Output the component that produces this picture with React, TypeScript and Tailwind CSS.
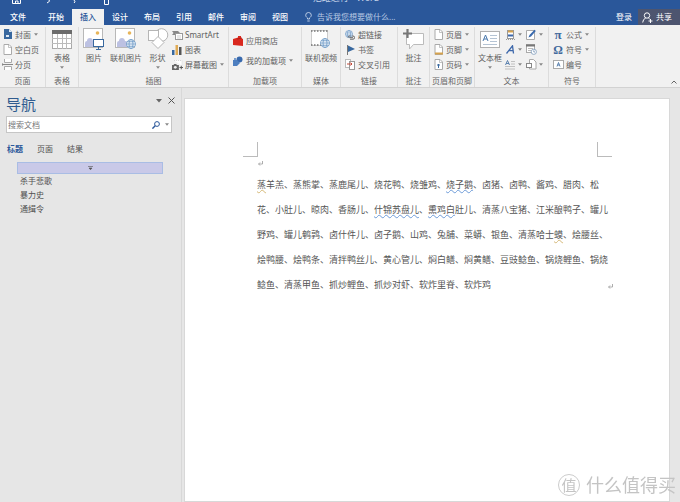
import React from 'react';

interface ChildrenProps {
    children: React.ReactNode;
}

interface GroupProps extends ChildrenProps {
    title: string;
    className: string;
}

interface ButtonProps {
    icon: React.ReactNode;
    label?: string;
    arrow?: boolean;
    className?: string;
}

const tabs = ['开始', '插入', '设计', '布局', '引用', '邮件', '审阅', '视图'];

const headings = ['杀手悲歌', '暴力史', '通缉令'];

const Caret = () => (
    <svg viewBox="0 0 4 3" className="h-[3px] w-1 shrink-0" fill="#888">
        <path d="M0 .3h4L2 2.7z" />
    </svg>
);

// All ribbon icons share one svg wrapper, drawn at their real size
const Icon = ({ w, h, children }: ChildrenProps & { w: number; h: number }) => (
    <svg width={w} height={h} viewBox={`0 0 ${w} ${h}`} fill="none" className="shrink-0">
        {children}
    </svg>
);

const Group = ({ title, className, children }: GroupProps) => (
    <section className={`flex shrink-0 flex-col border-r border-[#dcdcdc] ${className}`}>
        <div className="flex h-[46px]">{children}</div>
        <h2 className="mt-[2px] whitespace-nowrap text-center text-[8px] leading-[12px] text-[#666]">{title}</h2>
    </section>
);

const LargeButton = ({ icon, label, arrow, className = '' }: ButtonProps) => (
    <button type="button" className={`flex shrink-0 flex-col items-center ${className}`}>
        <span className="flex h-[24px] items-center">{icon}</span>
        <span className="whitespace-nowrap text-[8px] leading-[13px]">{label}</span>
        {arrow && <span className="flex h-[7px] items-center"><Caret /></span>}
    </button>
);

const SmallButton = ({ icon, label, arrow, className = '' }: ButtonProps) => (
    <button
        type="button"
        aria-label={label ? undefined : '更多'}
        className={`flex h-[15px] items-center gap-[3px] whitespace-nowrap text-[8px] leading-[12px] ${className}`}
    >
        <span className="flex w-[10px] shrink-0 justify-center">{icon}</span>
        {label && <span>{label}</span>}
        {arrow && <Caret />}
    </button>
);

const Globe = ({ x, y }: { x: number; y: number }) => (
    <g transform={`translate(${x} ${y})`} stroke="#6f9bc6" strokeWidth=".8">
        <circle cx="5" cy="5" r="4.5" fill="#eef4fa" />
        <ellipse cx="5" cy="5" rx="2" ry="4.5" />
        <path d="M.5 5h9M1.3 2.7h7.4M1.3 7.3h7.4" />
    </g>
);

const Photo = () => (
    <>
        <rect x=".5" y=".5" width="19" height="19" fill="#fff" stroke="#b8b8b8" />
        <circle cx="14.5" cy="5" r="1.8" fill="#e8b55a" />
        <path d="M2 19v-4q0-2 2-2 0-3 3-3 2.500 0 3 3 3 0 3 3v3z" fill="#bcc1e2" />
    </>
);

const TableIcon = () => (
    <Icon w={20} h={19}>
        <rect x=".5" y=".5" width="19" height="18" fill="#fff" stroke="#aaa" />
        <rect width="20" height="4" fill="#6c6c6c" />
        <path d="M5.500 4v15M10.500 4v15M14.500 4v15M0 8.500h20M0 13.500h20" stroke="#bbb" />
    </Icon>
);

const PictureIcon = () => (
    <Icon w={22} h={22}>
        <Photo />
        <rect x="10.500" y="11.500" width="10" height="7" fill="#fff" stroke="#38689f" />
        <path d="M15.500 19v2M13 21.500h5" stroke="#38689f" />
    </Icon>
);

const OnlinePictureIcon = () => (
    <Icon w={22} h={22}>
        <Photo />
        <Globe x={11} y={11} />
    </Icon>
);

const ShapesIcon = () => (
    <Icon w={22} h={22}>
        <circle cx="14.500" cy="7" r="6.300" fill="#fff" stroke="#b5b5b5" />
        <rect x="1.500" y="2.500" width="10" height="10" fill="#fff" stroke="#b5b5b5" />
        <path d="M11 8.500l6 6-6 6-6-6z" fill="#fff" stroke="#b5b5b5" />
    </Icon>
);

const PageIcon = ({ children }: { children?: React.ReactNode }) => (
    <Icon w={9} h={11}>
        <path d="M1 .5h5L8.500 3v7.500H1z" fill="#fff" stroke="#aaa" />
        <path d="M5.500.5V3.500h3" stroke="#aaa" strokeWidth=".7" />
        {children}
    </Icon>
);

const CoverIcon = () => (
    <Icon w={9} h={11}>
        <path d="M1 0h5l3 3v7H1z" fill="#38689f" />
        <path d="M6 0v3h3M3 6h3v2H3z" fill="#dce8f4" />
    </Icon>
);

const BreakIcon = () => (
    <Icon w={11} h={11}>
        <path d="M2.500 0v3.500h7V0M2.500 11V7.500h7V11" fill="#fff" stroke="#aaa" />
        <path d="M0 5.500h11" stroke="#888" />
        <path d="M0 4l2 1.500L0 7z" fill="#888" />
    </Icon>
);

const SmartArtIcon = () => (
    <Icon w={11} h={10}>
        <path d="M0 1h6l2 2-2 2H0l1.500-2z" fill="#888" />
        <rect x="3.500" y="3.500" width="7" height="6" fill="#fff" stroke="#999" />
        <path d="M5 6h4M5 8h4" stroke="#bbb" strokeWidth=".7" />
    </Icon>
);

const ChartIcon = () => (
    <Icon w={10} h={11}>
        <path d="M0 6h2.500v5H0z" fill="#38689f" />
        <path d="M3.500 1H6v10H3.500z" fill="#e0ab55" />
        <path d="M7 3h2.500v8H7z" fill="#555" />
    </Icon>
);

const ScreenshotIcon = () => (
    <Icon w={11} h={11}>
        <path d="M2 1.500h8v5" fill="#fff" stroke="#d5d5d5" strokeDasharray="1 1" />
        <path d="M0 6h1.500l.7-1h2l.7 1h2v5H0z" fill="#666" />
        <circle cx="3.300" cy="8.300" r="1.400" fill="#eee" />
        <path d="M7.500 8.500h3.500M9.250 6.800v3.500" stroke="#555" />
    </Icon>
);

const StoreIcon = () => (
    <Icon w={10} h={10}>
        <path d="M0 3l5-1.500V0h3v2l2 1v7L0 9z" fill="#d9281e" />
        <path d="M4 3l5-1" stroke="#b51d14" />
    </Icon>
);

const AddinIcon = () => (
    <Icon w={10} h={10}>
        <circle cx="6.500" cy="3.500" r="3" fill="#3869ad" />
        <path d="M0 4h4l3 3-3 3H0z" fill="#4d7fc0" />
        <circle cx="2" cy="3" r="1" fill="#4d7fc0" />
    </Icon>
);

const VideoIcon = () => (
    <Icon w={20} h={20}>
        <rect x=".5" y="1.500" width="16" height="15" fill="#fff" stroke="#ccc" />
        <path d="M0 2h17M0 16h17" stroke="#777" strokeWidth="1.500" strokeDasharray="1.500 1.500" />
        <Globe x={9} y={9} />
    </Icon>
);

const LinkIcon = () => (
    <Icon w={10} h={10}>
        <g transform="scale(.8)"><Globe x={0} y={0} /></g>
        <path d="M3 7.500a1.500 1.500 0 011.500-1.500h1M7 6h1a1.500 1.500 0 010 3.200H5M4.500 7.700H8" stroke="#666" />
    </Icon>
);

const FlagIcon = () => (
    <Icon w={9} h={10}>
        <path d="M1.500 0v10" stroke="#777" />
        <path d="M2 .5l7 3.500-7 3z" fill="#38689f" />
    </Icon>
);

const CrossRefIcon = () => (
    <Icon w={10} h={11}>
        <rect x=".5" y=".5" width="5" height="8" fill="#fff" stroke="#bbb" />
        <rect x="4.500" y="2.500" width="5" height="8" fill="#fff" stroke="#999" />
        <path d="M2 5h5M5.500 3.500L7 5 5.500 6.500" stroke="#c24a3a" />
    </Icon>
);

const CommentIcon = () => (
    <Icon w={21} h={21}>
        <path d="M3.500 4.500h17v11h-10l-4 4.500v-4.500h-3z" fill="#fff" stroke="#bbb" />
        <path d="M4.500 0v9M0 4.500h9" stroke="#777" strokeWidth="2.200" />
    </Icon>
);

const TextBoxIcon = () => (
    <Icon w={20} h={17}>
        <rect x=".5" y=".5" width="19" height="16" fill="#fff" stroke="#b0b0b0" />
        <path d="M3 10l2.500-6L8 10M4 8h3" stroke="#4a78ac" />
        <path d="M10 4.500h7M10 7.500h7M10 10.500h7M3 13.500h14" stroke="#b5c4d4" />
    </Icon>
);

const PartsIcon = () => (
    <Icon w={9} h={10}>
        <rect x="1.500" y=".5" width="6" height="8" fill="#fff" stroke="#999" />
        <path d="M2 1.500h5" stroke="#d6a24c" strokeWidth="2" />
        <path d="M2 5.500h5" stroke="#3d68ab" strokeWidth="2" />
        <path d="M0 9.500h9" stroke="#999" strokeDasharray="1 1" />
    </Icon>
);

const WordArtIcon = () => (
    <Icon w={9} h={9}>
        <path d="M.5 8.500L6.500.8l1 7.700M3 5.700h4" stroke="#3d68ab" strokeWidth="1.300" />
    </Icon>
);

const DropCapIcon = () => (
    <Icon w={10} h={10}>
        <path d="M.5 5l2-4.500L4.500 5M1.300 3.500h2.500" stroke="#38689f" strokeWidth=".8" />
        <path d="M6 1.500h4M6 4h4M0 6.500h10M0 9h10" stroke="#b5b5b5" strokeWidth=".8" />
    </Icon>
);

const SignatureIcon = () => (
    <Icon w={10} h={11}>
        <path d="M.5 1.500h8v9h-8z" fill="#fff" stroke="#aaa" />
        <path d="M2.500 8.500l1-2.500L8.500.8l1.300 1.300L5 7.500z" fill="#3869ad" />
    </Icon>
);

const DateIcon = () => (
    <Icon w={11} h={11}>
        <rect x=".5" y=".5" width="8" height="8" fill="#fff" stroke="#aaa" />
        <path d="M0 1.500h9" stroke="#777" strokeWidth="2" />
        <path d="M2 4.500h5M2 6.500h3" stroke="#bbb" />
        <circle cx="7.800" cy="7.800" r="2.600" fill="#fff" stroke="#7b99ba" strokeWidth=".8" />
        <path d="M7.800 6.300v1.700h1.200" stroke="#5b7fa8" strokeWidth=".7" />
    </Icon>
);

const ObjectIcon = () => (
    <Icon w={11} h={11}>
        <path d="M3.500.5h4l2.500 2.500v7H3.500z" fill="#fff" stroke="#aaa" />
        <rect x=".5" y="4.500" width="5" height="4" fill="#fff" stroke="#888" />
    </Icon>
);

const NumberIcon = () => (
    <Icon w={11} h={9}>
        <rect x=".5" y=".5" width="10" height="8" fill="#fff" stroke="#aaa" />
        <path d="M4 6.500l1.500-4L7 6.500M4.500 5h2" stroke="#38689f" strokeWidth=".8" />
    </Icon>
);

const Ribbon = () => (
    <div className="flex h-[63px] overflow-hidden border-b border-[#d2d2d2] bg-[#f1f1f1] pt-[2px] text-[#606060]">
        <Group title="页面" className="w-[46px]">
            <div className="pl-[2px]">
                <SmallButton icon={<CoverIcon />} label="封面" arrow />
                <SmallButton icon={<PageIcon />} label="空白页" />
                <SmallButton icon={<BreakIcon />} label="分页" />
            </div>
        </Group>
        <Group title="表格" className="w-[33px]">
            <LargeButton icon={<TableIcon />} label="表格" arrow className="w-8" />
        </Group>
        <Group title="插图" className="w-[150px]">
            <LargeButton icon={<PictureIcon />} label="图片" className="w-[30px]" />
            <LargeButton icon={<OnlinePictureIcon />} label="联机图片" className="w-[34px]" />
            <LargeButton icon={<ShapesIcon />} label="形状" arrow className="w-[29px]" />
            <div>
                <SmallButton icon={<SmartArtIcon />} label="SmartArt" />
                <SmallButton icon={<ChartIcon />} label="图表" />
                <SmallButton icon={<ScreenshotIcon />} label="屏幕截图" arrow />
            </div>
        </Group>
        <Group title="加载项" className="w-[73px]">
            <div className="flex flex-col gap-[5px] pt-[6px] pl-1">
                <SmallButton icon={<StoreIcon />} label="应用商店" />
                <SmallButton icon={<AddinIcon />} label="我的加载项" arrow />
            </div>
        </Group>
        <Group title="媒体" className="w-[39px]">
            <LargeButton icon={<VideoIcon />} label="联机视频" className="w-[38px]" />
        </Group>
        <Group title="链接" className="w-[57px]">
            <div className="pl-1">
                <SmallButton icon={<LinkIcon />} label="超链接" />
                <SmallButton icon={<FlagIcon />} label="书签" />
                <SmallButton icon={<CrossRefIcon />} label="交叉引用" />
            </div>
        </Group>
        <Group title="批注" className="w-8">
            <LargeButton icon={<CommentIcon />} label="批注" className="w-[31px]" />
        </Group>
        <Group title="页眉和页脚" className="w-[45px]">
            <div className="pl-[3px]">
                <SmallButton icon={<PageIcon />} label="页眉" arrow />
                <SmallButton icon={<PageIcon><path d="M1 9.500h8" stroke="#d6a24c" strokeWidth="2" /></PageIcon>} label="页脚" arrow />
                <SmallButton icon={<PageIcon><path d="M3 6h3M4.500 5v4" stroke="#38689f" /></PageIcon>} label="页码" arrow />
            </div>
        </Group>
        <Group title="文本" className="w-[74px]">
            <LargeButton icon={<TextBoxIcon />} label="文本框" arrow className="w-[30px]" />
            <div className="w-[21px]">
                <SmallButton icon={<PartsIcon />} arrow />
                <SmallButton icon={<WordArtIcon />} arrow />
                <SmallButton icon={<DropCapIcon />} arrow />
            </div>
            <div>
                <SmallButton icon={<SignatureIcon />} arrow />
                <SmallButton icon={<DateIcon />} />
                <SmallButton icon={<ObjectIcon />} arrow />
            </div>
        </Group>
        <Group title="符号" className="w-[47px]">
            <div className="pl-1">
                <SmallButton icon={<span className="font-['Liberation_Serif',serif] text-[13px] font-bold text-[#41699c]">π</span>} label="公式" arrow />
                <SmallButton icon={<span className="font-['Liberation_Serif',serif] text-[12px] font-bold text-[#41699c]">Ω</span>} label="符号" arrow />
                <SmallButton icon={<NumberIcon />} label="编号" />
            </div>
        </Group>
        <button type="button" aria-label="折叠功能区" className="mt-auto mr-[2px] mb-[2px] ml-auto p-[1px]">
            <svg width="6" height="4" viewBox="0 0 6 4" fill="none" stroke="#666"><path d="M.5 3.500L3 1l2.500 2.500" /></svg>
        </button>
    </div>
);

const TitleBar = () => (
    <header className="bg-[#2a579a] text-[8px] text-white">
        <div className="flex h-[9px] overflow-hidden">
            <div className="flex flex-1 pl-3">
                <svg width="100" height="6" viewBox="0 0 100 6" fill="none" stroke="#fff">
                    <path d="M.5 0v3.500h8V0M3.500 3V1h2.500v2" />
                    <path d="M37 0q2 1-2 3M62 0q2 2 0 3" />
                    <path d="M92.500 0v4.500h4V0" />
                </svg>
            </div>
            <h1 className="-mt-2 text-[9px] leading-[12px] text-[#c5d3e8]">范雎进行 - Word</h1>
            <div className="flex-1" />
        </div>
        <nav className="flex h-4 items-stretch leading-4">
            <button type="button" className="w-9 font-medium">文件</button>
            <div className="flex pl-1">
                {tabs.map((tab) => (
                    <button
                        key={tab}
                        type="button"
                        className={`w-8 font-medium ${tab === '插入' ? 'bg-[#f1f1f1] text-[#2a579a]' : ''}`}
                    >
                        {tab}
                    </button>
                ))}
            </div>
            <button type="button" className="ml-[9px] flex items-center gap-[5px] text-[8px] text-[#b9cae4]">
                <svg width="7" height="10" viewBox="0 0 7 10" fill="none" stroke="#c9d6ea">
                    <path d="M2.500 7V6C1.500 5 .7 4.500.7 3.200a2.800 2.700 0 015.600 0C6.300 4.500 5.500 5 4.500 6v1zM2.300 9h2.400" strokeWidth=".9" />
                </svg>
                告诉我您想要做什么...
            </button>
            <button type="button" className="mr-[6px] ml-auto">登录</button>
            <button type="button" className="flex w-[42px] items-center gap-[3px] bg-[#4d556f] pl-1">
                <svg width="11" height="11" viewBox="0 0 11 11" fill="none" stroke="#fff">
                    <circle cx="5" cy="3.500" r="2.700" />
                    <path d="M.7 10.500q.3-3.500 3-4.500M6.500 6.200l1.200.8M8.500 7v4M6.500 9h4" />
                </svg>
                共享
            </button>
        </nav>
    </header>
);

const Navigation = () => (
    <aside className="w-[182px] shrink-0 border-r border-[#d8d8d8] pl-[6px] text-[#505050]">
        <div className="flex pt-[4px]">
            <h2 className="pt-[1px] text-[15px] leading-[22px] text-[#2f5b8f]">导航</h2>
            <div className="mr-[6px] ml-auto flex h-[17px] items-center gap-[6px]">
                <button type="button" aria-label="选项">
                    <svg width="6" height="4" viewBox="0 0 6 4" fill="#666"><path d="M0 0h6L3 3.500z" /></svg>
                </button>
                <button type="button" aria-label="关闭">
                    <svg width="7" height="7" viewBox="0 0 7 7" stroke="#555"><path d="M.5.5l6 6M6.500.5l-6 6" /></svg>
                </button>
            </div>
        </div>
        <div className="mr-[9px] mt-[1px] flex h-[17px] items-center border border-[#c6c6c6] bg-white pr-[2px]">
            <input
                type="text"
                aria-label="搜索文档"
                placeholder="搜索文档"
                className="h-full min-w-0 flex-1 pl-[1px] text-[8px] outline-none placeholder:text-[#777]"
            />
            <button type="button" aria-label="搜索" className="mr-[5px]">
                <svg width="8" height="8" viewBox="0 0 8 8" fill="none" stroke="#2a579a">
                    <circle cx="5" cy="3" r="2.400" />
                    <path d="M3.200 4.800L.4 7.600" strokeWidth="1.400" />
                </svg>
            </button>
            <Caret />
        </div>
        <div className="mt-[10px] flex gap-[14px] pl-[1px] text-[8px] leading-[12px]">
            <button type="button" className="font-bold text-[#2a579a]">标题</button>
            <button type="button">页面</button>
            <button type="button">结果</button>
        </div>
        <div className="mt-[7px] mr-[18px] ml-[11px] flex h-3 items-center justify-center border border-[#a9bde4] bg-[#c9c9e8]">
            <svg width="5" height="4" viewBox="0 0 5 4"><path d="M0 .5h5M1 2l1.500 1.700L4 2z" fill="#555" stroke="#555" strokeWidth=".6" /></svg>
        </div>
        <ul className="pl-[14px] text-[8px] leading-[14px]">
            {headings.map((heading) => (
                <li key={heading}>{heading}</li>
            ))}
        </ul>
    </aside>
);

// Proofing marks under words
const Blue = ({ children }: ChildrenProps) => (
    <span className="underline decoration-[#6d9bd8] decoration-wavy decoration-1 underline-offset-1">{children}</span>
);

const Gold = ({ children }: ChildrenProps) => (
    <span className="underline decoration-[#d5b877] decoration-wavy decoration-1 underline-offset-1">{children}</span>
);

const Return = () => (
    <svg width="5" height="5" viewBox="0 0 5 5" fill="none" stroke="#999" strokeWidth=".8">
        <path d="M4.500 0v3H.7M2 1.500L.5 3 2 4.500" />
    </svg>
);

const Document = () => (
    <main className="mt-[10px] mr-[10px] ml-[2px] min-w-0 flex-1 border border-[#d8d8d8] bg-white pt-[43px]">
        <div className="mr-[57px] ml-[58px] flex justify-between">
            <span className="size-[15px] border-r border-b border-[#bbb]" />
            <span className="size-[15px] border-b border-l border-[#bbb]" />
        </div>
        <div className="pt-1 pl-[73px]"><Return /></div>
        <div className="flex items-end pt-[6px] pl-[72px]">
            <p className="whitespace-nowrap text-[9px] leading-[25px] text-[#555]">
                <Gold>蒸</Gold>羊羔、蒸熊掌、蒸鹿尾儿、烧花鸭、烧雏鸡、<Blue>烧子鹅</Blue>、卤猪、卤鸭、酱鸡、腊肉、松<br />
                花、小肚儿、晾肉、香肠儿、<Blue>什锦苏盘儿</Blue>、<Blue>熏鸡白</Blue>肚儿、清蒸八宝猪、江米酿鸭子、罐儿<br />
                野鸡、罐儿鹌鹑、卤什件儿、卤子鹅、山鸡、兔脯、菜蟒、银鱼、清蒸哈士<Gold>蟆</Gold>、烩腰丝、<br />
                烩鸭腰、烩鸭条、清拌鸭丝儿、黄心管儿、焖白鳝、焖黄鳝、豆豉鲶鱼、锅烧鲤鱼、锅烧<br />
                鲶鱼、清蒸甲鱼、抓炒鲤鱼、抓炒对虾、软炸里脊、软炸鸡
            </p>
            <span className="pb-2"><Return /></span>
        </div>
    </main>
);

const App = () => (
    <div className="flex min-h-screen flex-col overflow-hidden bg-[#e6e6e6] font-['Noto_Sans','Noto_Sans_CJK_SC',sans-serif]">
        <TitleBar />
        <Ribbon />
        <div className="flex flex-1">
            <Navigation />
            <Document />
        </div>
        {/* Site mark over the bottom right corner */}
        <div className="fixed right-1 bottom-1 flex items-center gap-[6px] text-[18px] leading-[26px] text-[#c4c4c4]">
            <span className="flex size-[22px] items-center justify-center rounded-full border border-[#ccc] text-[15px]">值</span>
            什么值得买
        </div>
    </div>
);

export default App;
